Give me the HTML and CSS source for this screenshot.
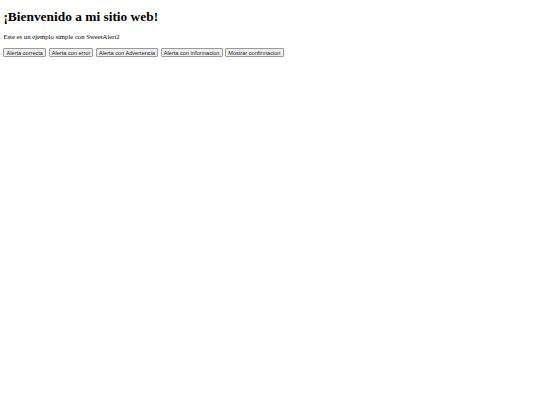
FILE: index.html
```html
<!DOCTYPE html>
<html lang="es">
<head>
<meta charset="utf-8">
<title>SweetAlert2</title>
<link rel="stylesheet" href="styles.css">
</head>
<body class="page">
<h1 class="title">¡Bienvenido a mi sitio web!</h1>
<p class="intro">Este es un ejemplo simple con SweetAlert2</p>
<div class="actions">
<button class="btn">Alerta correcta</button>
<button class="btn">Alerta con error</button>
<button class="btn">Alerta con Advertencia</button>
<button class="btn">Alerta con informacion</button>
<button class="btn">Mostrar confirmacion</button>
</div>
</body>
</html>
```
FILE: styles.css
```css
html, body {
  background: #ffffff;
}
.page {
  margin: 0;
  padding: 0 3.4px;
  font-family: "Liberation Serif", "Times New Roman", serif;
  color: #000;
}
.title {
  font-size: 13.4px;
  font-weight: bold;
  margin: 9px 0;
  line-height: 1.15;
}
.intro {
  font-size: 6.7px;
  margin: 6.7px 0;
  line-height: 1.15;
}
.actions {
  display: flex;
  gap: 2.4px;
  align-items: flex-start;
}
.btn {
  font-family: "Liberation Sans", Arial, sans-serif;
  font-size: 5.6px;
  line-height: 1.15;
  padding: 1px 2.2px;
  margin: 0;
  background: #efefef;
  color: #222;
  border: 0.8px solid #9a9a9a;
  border-radius: 1px;
  height: 8.8px;
}
```
